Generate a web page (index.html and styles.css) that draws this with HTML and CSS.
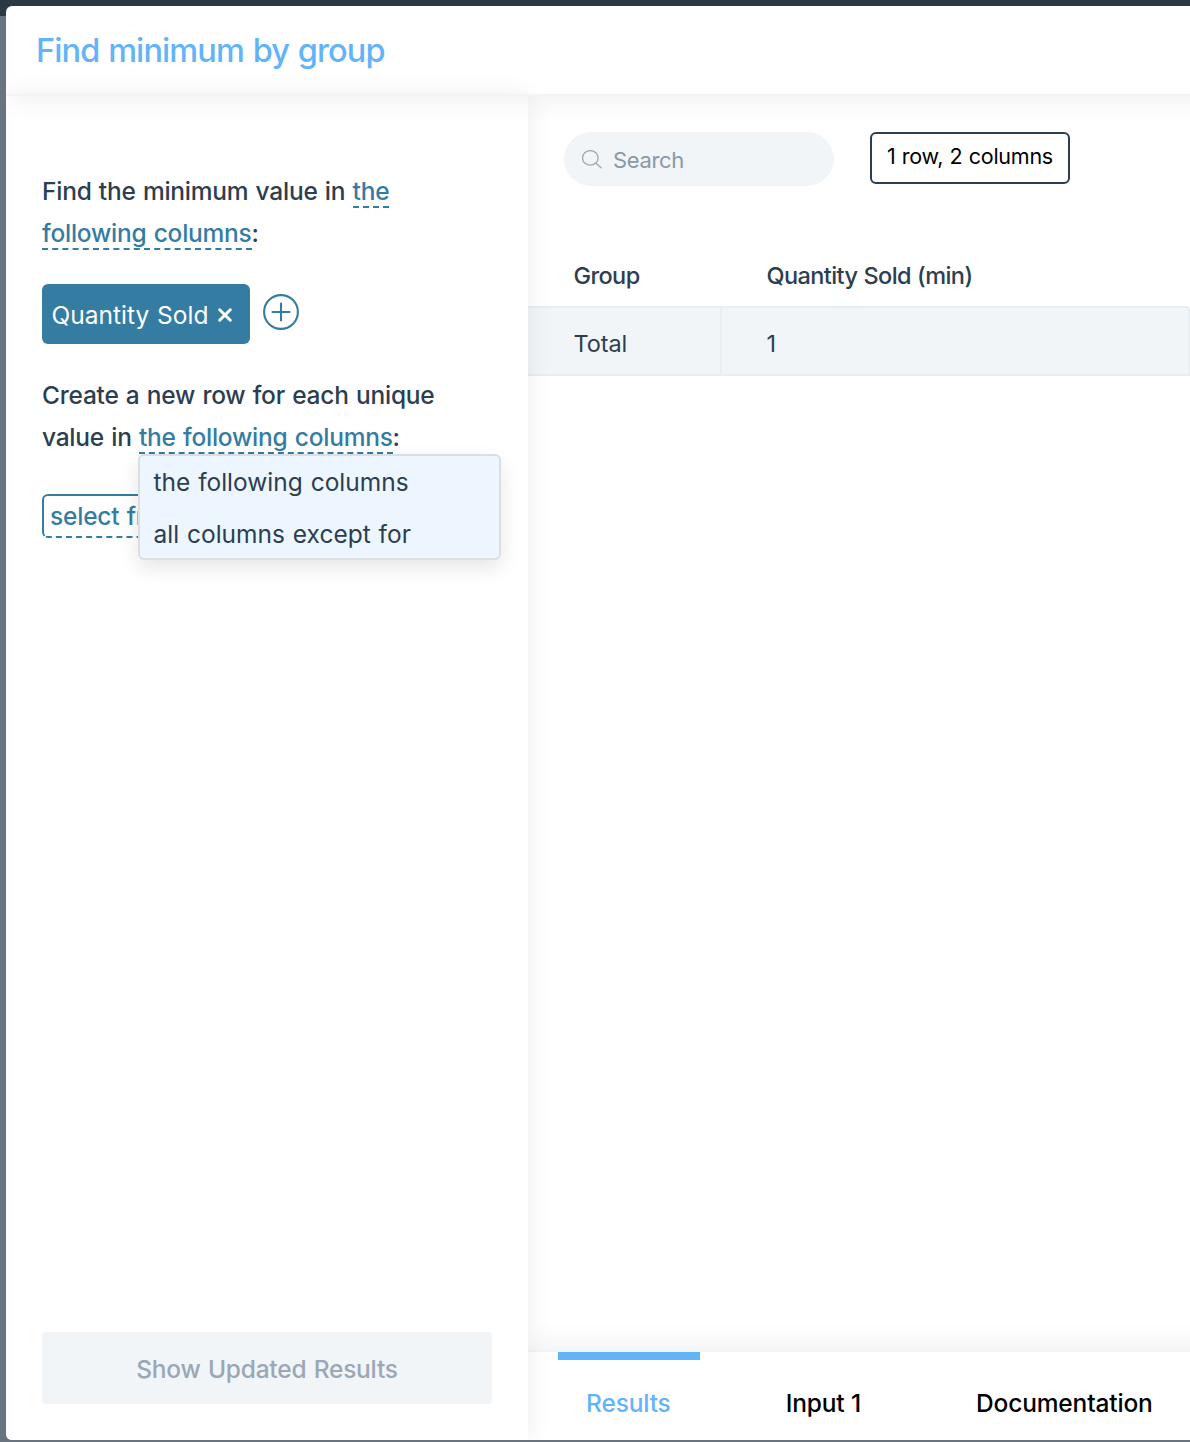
FILE: index.html
```html
<!DOCTYPE html>
<html lang="en">
<head>
<meta charset="utf-8">
<title>Find minimum by group</title>
<link rel="stylesheet" href="styles.css">
</head>
<body>
<div class="modal">
  <header class="modal-header"><h1 class="title">Find minimum by group</h1></header>
  <div class="modal-body">
    <aside class="settings">
      <p class="sentence">Find the minimum value in <a class="choice">the following columns</a>:</p>
      <div class="chips">
        <span class="chip">Quantity Sold
          <svg class="chip-close" viewBox="0 0 14 14"><path d="M1.7 1.7 12.3 12.3M12.3 1.7 1.7 12.3"/></svg>
        </span>
        <svg class="add" viewBox="0 0 36 36"><circle cx="18" cy="18" r="16.9"/><path d="M18 9.5v17M9.5 18h17"/></svg>
      </div>
      <p class="sentence">Create a new row for each unique value in <span class="anchor"><a class="choice">the following columns</a><span class="menu"><span class="menu-item">the following columns</span><span class="menu-item">all columns except for</span></span></span>:</p>
      <div class="select">select from list</div>
      <button class="update">Show Updated Results</button>
    </aside>
    <main class="results">
      <div class="toolbar">
        <div class="search">
          <svg class="search-icon" viewBox="0 0 20 20"><ellipse cx="8.3" cy="7.9" rx="7.8" ry="7.3"/><path d="M13.7 13.1 19.6 18.2"/></svg>
          <span>Search</span>
        </div>
        <div class="count">1 row, 2 columns</div>
      </div>
      <div class="table">
        <div class="row head"><div class="cell first">Group</div><div class="cell">Quantity Sold (min)</div></div>
        <div class="row data"><div class="cell first">Total</div><div class="cell">1</div></div>
      </div>
      <nav class="tabs">
        <a class="tab active">Results</a>
        <a class="tab">Input 1</a>
        <a class="tab">Documentation</a>
      </nav>
    </main>
  </div>
</div>
</body>
</html>
```
FILE: styles.css
```css
* { box-sizing: border-box; }
body {
  margin: 0;
  height: 1442px;
  padding: 6px 0 2px 6px;
  overflow: hidden;
  background: linear-gradient(#2b3947 16px, #697481 16px);
  font-family: Inter, sans-serif;
  color: #2c3e50;
}
.modal {
  height: 1434px;
  display: flex;
  flex-direction: column;
  background: #fff;
  border-radius: 6px 0 0 6px;
  overflow: hidden;
}
.modal-header {
  position: relative;
  z-index: 3;
  height: 90px;
  flex: none;
  margin-right: -30px;
  padding-left: 30px;
  border-bottom: 2px solid #f1f5f8;
  box-shadow: 4px 8px 24px rgba(0, 0, 0, .05);
}
.title {
  margin: 0;
  font-size: 32.5px;
  line-height: 89px;
  font-weight: 500;
  letter-spacing: -.9px;
  word-spacing: 1px;
  color: #63b3f9;
}
.modal-body { flex: 1; display: flex; min-height: 0; }
.settings {
  position: relative;
  z-index: 2;
  width: 522px;
  flex: none;
  display: flex;
  flex-direction: column;
  align-items: flex-start;
  padding: 74px 36px 36px;
  background: #fff;
  box-shadow: 0 0 24px rgba(0, 0, 0, .08);
}
.sentence {
  margin: 0;
  width: 420px;
  font-size: 24.5px;
  line-height: 42px;
  font-weight: 500;
  letter-spacing: -.24px;
  word-spacing: 1px;
}
.choice { color: #357ca3; border-bottom: 2px dashed #357ca3; }
.chips { display: flex; align-items: center; gap: 13px; margin: 30px 0; }
.chip {
  width: 208px;
  height: 60px;
  display: flex;
  align-items: center;
  justify-content: space-between;
  padding: 2px 18px 0 9.5px;
  border-radius: 6px;
  background: #357ca3;
  color: #fff;
  font-size: 24.5px;
  white-space: nowrap;
  word-spacing: 1px;
}
.chip-close { width: 14px; height: 14px; fill: none; stroke: #fff; stroke-width: 2.9; stroke-linecap: round; }
.add { width: 36px; height: 36px; margin-bottom: 4px; fill: none; stroke: #357ca3; stroke-width: 2.1; stroke-linecap: round; }
.anchor { position: relative; }
.menu {
  position: absolute;
  left: -1px;
  top: 32px;
  width: 363px;
  height: 106px;
  display: flex;
  flex-direction: column;
  padding: 0 13.5px;
  border: 2px solid #dcdee0;
  border-radius: 6px;
  background: #edf6fe;
  box-shadow: 0 8px 20px rgba(0, 0, 0, .1);
  font-weight: 400;
  letter-spacing: 0;
}
.menu-item { line-height: 52px; white-space: nowrap; }
.select {
  height: 44px;
  margin-top: 36px;
  padding: 0 6px;
  border: 2px solid #357ca3;
  border-bottom-style: dashed;
  border-radius: 6px;
  color: #357ca3;
  font-size: 24.5px;
  line-height: 41px;
  font-weight: 500;
  letter-spacing: -.2px;
  word-spacing: 1px;
}
.update {
  width: 450px;
  height: 72px;
  margin-top: auto;
  padding: 2px 0 0;
  border: 0;
  border-radius: 4px;
  background: #f1f5f8;
  color: #9aa7b5;
  font: 500 24.5px Inter, sans-serif;
  letter-spacing: -.22px;
  word-spacing: 1px;
}
.results { flex: 1; min-width: 0; display: flex; flex-direction: column; }
.toolbar { display: flex; gap: 36px; padding: 36px 0 0 36px; height: 150px; }
.search {
  width: 270px;
  height: 54px;
  display: flex;
  align-items: center;
  gap: 11px;
  padding: 2px 18px 0;
  border-radius: 27px;
  background: #f1f5f8;
  color: #8b98a5;
  font-size: 22px;
  letter-spacing: -.35px;
}
.search-icon { width: 20px; height: 20px; margin-bottom: 1px; fill: none; stroke: #9aa9b6; stroke-width: 1.3; }
.count {
  width: 200px;
  height: 52px;
  border: 2px solid #2c3e50;
  border-radius: 6px;
  color: #000;
  font-size: 21.5px;
  line-height: 45px;
  letter-spacing: -.25px;
  word-spacing: .5px;
  text-align: center;
}
.table { font-size: 23.5px; letter-spacing: -.1px; }
.row { display: flex; }
.head { height: 60px; line-height: 59px; font-weight: 500; letter-spacing: -.6px; word-spacing: .5px; }
.data {
  height: 70px;
  line-height: 71px;
  border: 2px solid #e8eef1;
  border-left: 0;
  background: #f1f5f8;
  border-top-right-radius: 4px;
}
.cell { flex: 1; padding-left: 44.5px; }
.first { flex: none; width: 194px; padding-left: 45.5px; }
.data .first { border-right: 2px solid #e8eef1; }
.tabs {
  display: flex;
  height: 90px;
  margin-top: auto;
  margin-right: -30px;
  padding-left: 30px;
  gap: 58px;
  border-top: 2px solid #f1f5f8;
  box-shadow: 0 -8px 24px rgba(0, 0, 0, .05);
  font-size: 24.5px;
  font-weight: 500;
  letter-spacing: -.15px;
  color: #000;
}
.tab { padding: 0 29px 0 28px; line-height: 87px; border-top: 8px solid transparent; white-space: nowrap; }
.active { border-color: #63b3f9; color: #63b3f9; }
```
